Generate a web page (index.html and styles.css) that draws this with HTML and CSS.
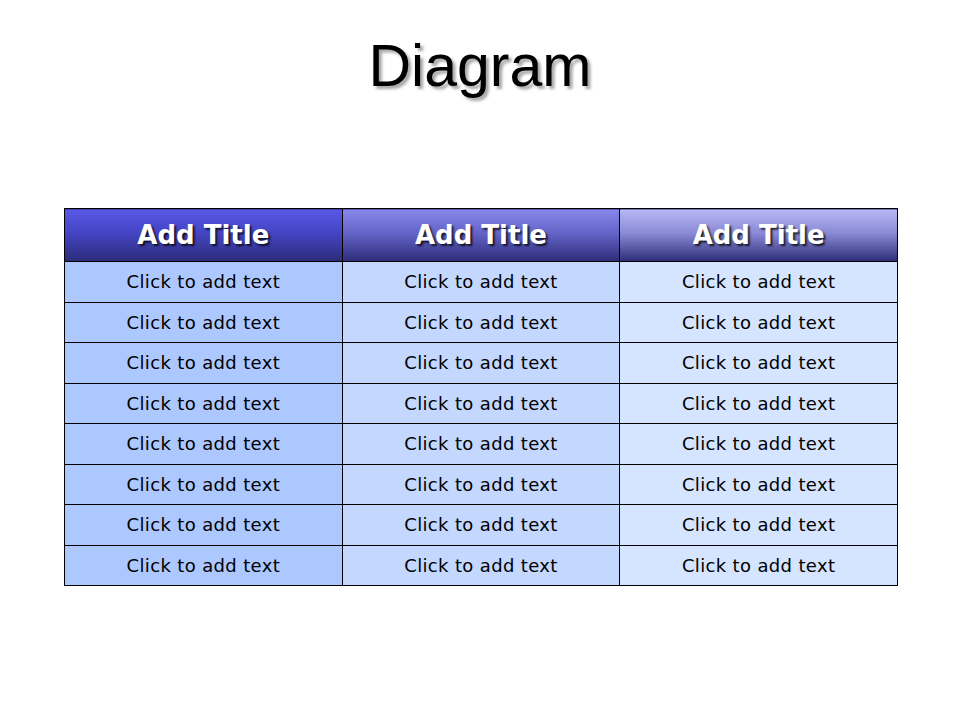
FILE: index.html
```html
<!DOCTYPE html>
<html>
<head>
<meta charset="utf-8">
<link rel="stylesheet" href="styles.css">
</head>
<body>
<div class="slide">
  <h1 class="title">Diagram</h1>
  <table class="grid">
    <thead>
      <tr>
        <th class="h1">Add Title</th>
        <th class="h2">Add Title</th>
        <th class="h3">Add Title</th>
      </tr>
    </thead>
    <tbody>
      <tr><td class="c1">Click to add text</td><td class="c2">Click to add text</td><td class="c3">Click to add text</td></tr>
      <tr><td class="c1">Click to add text</td><td class="c2">Click to add text</td><td class="c3">Click to add text</td></tr>
      <tr><td class="c1">Click to add text</td><td class="c2">Click to add text</td><td class="c3">Click to add text</td></tr>
      <tr><td class="c1">Click to add text</td><td class="c2">Click to add text</td><td class="c3">Click to add text</td></tr>
      <tr><td class="c1">Click to add text</td><td class="c2">Click to add text</td><td class="c3">Click to add text</td></tr>
      <tr><td class="c1">Click to add text</td><td class="c2">Click to add text</td><td class="c3">Click to add text</td></tr>
      <tr><td class="c1">Click to add text</td><td class="c2">Click to add text</td><td class="c3">Click to add text</td></tr>
      <tr><td class="c1">Click to add text</td><td class="c2">Click to add text</td><td class="c3">Click to add text</td></tr>
    </tbody>
  </table>
</div>
</body>
</html>
```
FILE: styles.css
```css
html, body {
  margin: 0;
  padding: 0;
  background: #ffffff;
}
.slide {
  width: 960px;
  height: 720px;
  display: flex;
  flex-direction: column;
  align-items: flex-start;
}
.title {
  align-self: center;
  margin: 33px 0 0 0;
  font-family: "Liberation Sans", Arial, sans-serif;
  font-weight: normal;
  font-size: 59px;
  line-height: 67px;
  color: #000000;
  text-shadow: 3px 3px 3px rgba(0,0,0,0.35);
}
.grid {
  margin: 108px 0 0 64px;
  width: 834px;
  border-collapse: collapse;
  table-layout: fixed;
  font-family: "DejaVu Sans", Verdana, sans-serif;
}
.grid th, .grid td {
  border: 1px solid #000000;
  text-align: center;
  padding: 0;
}
.grid th {
  height: 52px;
  font-size: 26px;
  font-weight: bold;
  color: #ffffff;
  text-shadow: 2px 2px 2px rgba(0,0,0,0.75);
}
.grid td {
  height: 39.5px;
  font-size: 18px;
  letter-spacing: 0.35px;
  color: #000000;
}
.h1 { background: linear-gradient(to bottom, #5858e6 0%, #4444c4 45%, #2c2c78 100%); }
.h2 { background: linear-gradient(to bottom, #8888ec 0%, #6464c8 45%, #2c2c78 100%); }
.h3 { background: linear-gradient(to bottom, #b8b8f4 0%, #8a8ad6 45%, #2c2c78 100%); }
.c1 { background: #adc7ff; }
.c2 { background: #c4d7ff; }
.c3 { background: #d5e4ff; }
```
